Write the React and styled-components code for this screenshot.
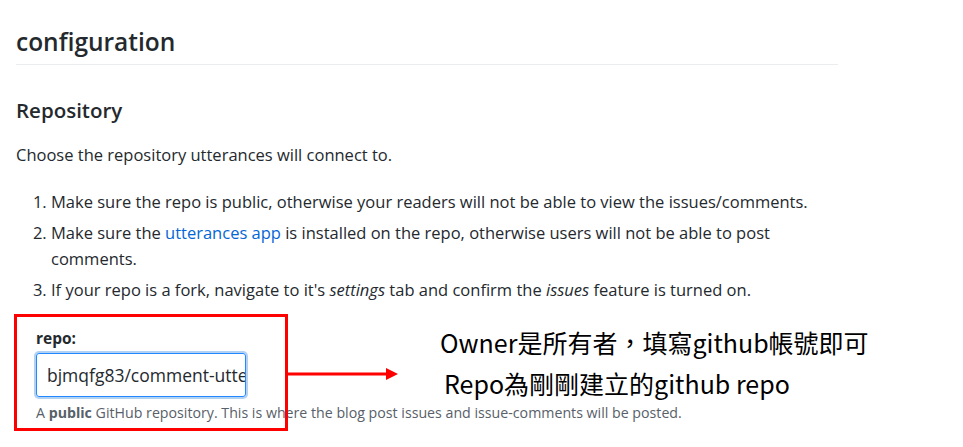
import React from "react";
import styled, { createGlobalStyle } from "styled-components";

const Global = createGlobalStyle`
  html, body { margin: 0; padding: 0; background: #fff; }
  body { font-family: "Open Sans", "Noto Sans", sans-serif; color: #24292e; }
`;

const Page = styled.div`
  width: 963px;
  height: 447px;
  overflow: hidden;
  padding: 0 0 0 16px;
  box-sizing: border-box;
`;

const Content = styled.div`
  width: 822px;
`;

const H2 = styled.h2`
  margin: 26px 0 0;
  padding-bottom: 6px;
  font-size: 24.5px;
  line-height: 32px;
  font-weight: 600;
  border-bottom: 1px solid #eaecef;
`;

const H3 = styled.h3`
  margin: 31px 0 0;
  font-size: 20.5px;
  line-height: 28px;
  font-weight: 600;
`;

const P = styled.p`
  margin: 19px 0 0;
  font-size: 16.5px;
  line-height: 24px;
`;

const List = styled.ol`
  margin: 22px 0 0;
  padding-left: 35px;
  font-size: 16.5px;
  line-height: 26px;
  li + li { margin-top: 5px; }
`;

const Link = styled.a`
  color: #0366d6;
  text-decoration: none;
`;

const FormArea = styled.div`
  position: relative;
  margin-top: 25px;
  padding-left: 20px;
`;

const Label = styled.label`
  display: block;
  font-size: 15.5px;
  line-height: 20px;
  font-weight: 700;
  color: #24292e;
`;

const Input = styled.div`
  margin-top: 5px;
  width: 210px;
  height: 44px;
  box-sizing: border-box;
  border: 1px solid #2188ff;
  border-radius: 3px;
  box-shadow: 0 0 0 2px rgba(3, 102, 214, 0.3);
  padding: 0 0 0 11px;
  display: flex;
  align-items: center;
  overflow: hidden;
  white-space: nowrap;
  font-size: 17.5px;
  color: #24292e;
`;

const Caret = styled.span`
  display: inline-block;
  width: 1px;
  height: 21px;
  background: #24292e;
  margin-right: -1px;
`;

const Note = styled.p`
  margin: 7px 0 0;
  font-size: 14.2px;
  line-height: 18px;
  color: #586069;
  white-space: nowrap;
  b { font-weight: 700; }
`;

const RedBox = styled.div`
  position: absolute;
  left: -2px;
  top: -14px;
  width: 274px;
  height: 117px;
  box-sizing: border-box;
  border: 3px solid #ff0000;
  pointer-events: none;
`;

const Arrow = styled.svg`
  position: absolute;
  left: 272px;
  top: 39px;
`;

const Annot = styled.div`
  position: absolute;
  left: 424px;
  top: -1px;
  font-family: "Noto Sans CJK TC", "Noto Sans", sans-serif;
  font-size: 25px;
  line-height: 30px;
  color: #000;
  white-space: nowrap;
`;

const AnnotLine = styled.div`
  padding-left: ${(p) => p.$indent || 0}px;
  & + & { margin-top: 11px; }
`;

export default function App() {
  return (
    <>
      <Global />
      <Page>
        <Content>
          <H2>configuration</H2>
          <H3>Repository</H3>
          <P>Choose the repository utterances will connect to.</P>
          <List>
            <li>Make sure the repo is public, otherwise your readers will not be able to view the issues/comments.</li>
            <li>
              Make sure the <Link href="#">utterances app</Link> is installed on the repo, otherwise users will not be able to post comments.
            </li>
            <li>
              If your repo is a fork, navigate to it's <em>settings</em> tab and confirm the <em>issues</em> feature is turned on.
            </li>
          </List>
          <FormArea>
            <Label>repo:</Label>
            <Input>
              <Caret />
              bjmqfg83/comment-utterances
            </Input>
            <Note>
              A <b>public</b> GitHub repository. This is where the blog post issues and issue-comments will be posted.
            </Note>
            <RedBox />
            <Arrow width="112" height="14" viewBox="0 0 112 14">
              <line x1="0" y1="7" x2="100" y2="7" stroke="#ff0000" strokeWidth="3" />
              <polygon points="98,1 110,7 98,13" fill="#ff0000" />
            </Arrow>
            <Annot>
              <AnnotLine>Owner是所有者，填寫github帳號即可</AnnotLine>
              <AnnotLine $indent={4}>Repo為剛剛建立的github repo</AnnotLine>
            </Annot>
          </FormArea>
        </Content>
      </Page>
    </>
  );
}
